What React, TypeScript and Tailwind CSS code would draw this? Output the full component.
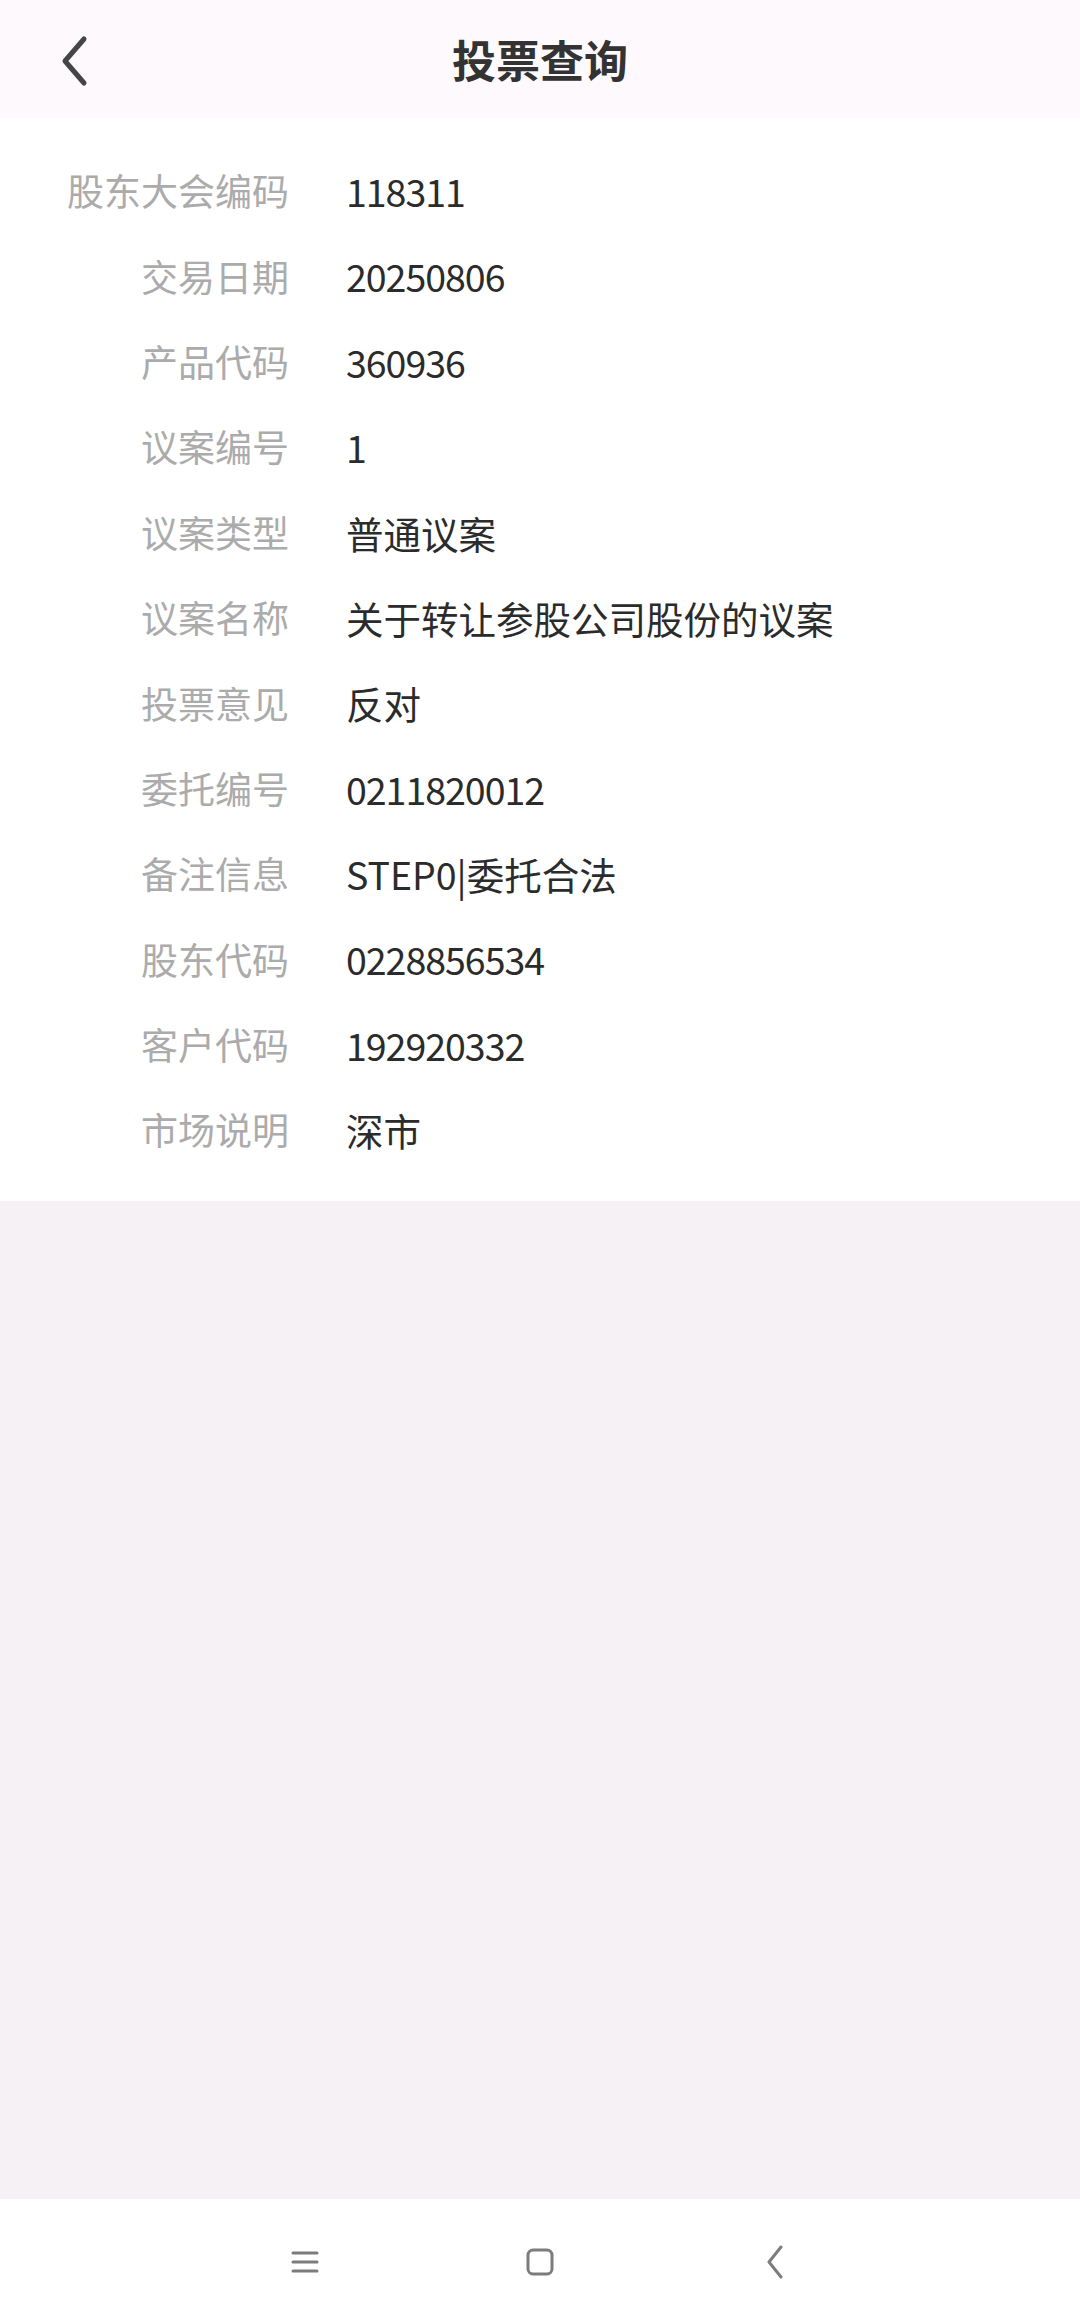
const rows = [
  { label: '股东大会编码', value: '118311' },
  { label: '交易日期', value: '20250806' },
  { label: '产品代码', value: '360936' },
  { label: '议案编号', value: '1' },
  { label: '议案类型', value: '普通议案' },
  { label: '议案名称', value: '关于转让参股公司股份的议案' },
  { label: '投票意见', value: '反对' },
  { label: '委托编号', value: '0211820012' },
  { label: '备注信息', value: 'STEP0|委托合法' },
  { label: '股东代码', value: '0228856534' },
  { label: '客户代码', value: '192920332' },
  { label: '市场说明', value: '深市' },
];

export default function App() {
  return (
    <div
      className="w-[1080px] h-[2324px] flex flex-col bg-[#f5f1f5]"
      style={{ fontFamily: '"Noto Sans CJK SC", "Noto Sans", sans-serif' }}
    >
      {/* header */}
      <header className="relative h-[118px] shrink-0 bg-[#fdf9fd] flex items-center justify-center">
        <button className="absolute left-[58px] top-[35px] text-[#454545]">
          <svg width="32" height="52" viewBox="0 0 32 52">
            <path
              d="M26 4L7 26l19 22"
              fill="none"
              stroke="currentColor"
              strokeWidth="5"
              strokeLinecap="round"
              strokeLinejoin="round"
            />
          </svg>
        </button>
        <h1 className="text-[44px] font-bold text-[#333] leading-none">投票查询</h1>
      </header>

      {/* detail list */}
      <div className="bg-white pt-[30px] pb-[28px]">
        {rows.map((row) => (
          <div key={row.label} className="h-[85.4px] flex items-center">
            <div className="w-[289px] text-right text-[37px] leading-none text-[#ababab]">
              {row.label}
            </div>
            <div
              className={
                /^\d+$/.test(row.value)
                  ? 'ml-[57px] text-[37.5px] leading-none text-[#2b2b2b] tracking-[-1px]'
                  : 'ml-[57px] text-[37.5px] leading-none text-[#2b2b2b]'
              }
            >
              {row.value}
            </div>
          </div>
        ))}
      </div>

      <div className="flex-1" />

      {/* system nav bar */}
      <nav className="h-[125px] shrink-0 bg-white flex items-center justify-center">
        <div className="w-[235px] flex justify-center">
          <svg width="28" height="24" viewBox="0 0 28 24" className="text-[#7c7c7c]">
            <path d="M2 3h24M2 12h24M2 21h24" stroke="currentColor" strokeWidth="3" strokeLinecap="round" />
          </svg>
        </div>
        <div className="w-[235px] flex justify-center">
          <svg width="28" height="28" viewBox="0 0 28 28" className="text-[#7c7c7c]">
            <rect x="2" y="2" width="24" height="24" rx="5" fill="none" stroke="currentColor" strokeWidth="3" />
          </svg>
        </div>
        <div className="w-[235px] flex justify-center">
          <svg width="20" height="34" viewBox="0 0 20 34" className="text-[#7c7c7c]">
            <path d="M16 2L4 17l12 15" fill="none" stroke="currentColor" strokeWidth="3" strokeLinecap="round" strokeLinejoin="round" />
          </svg>
        </div>
      </nav>
    </div>
  );
}
